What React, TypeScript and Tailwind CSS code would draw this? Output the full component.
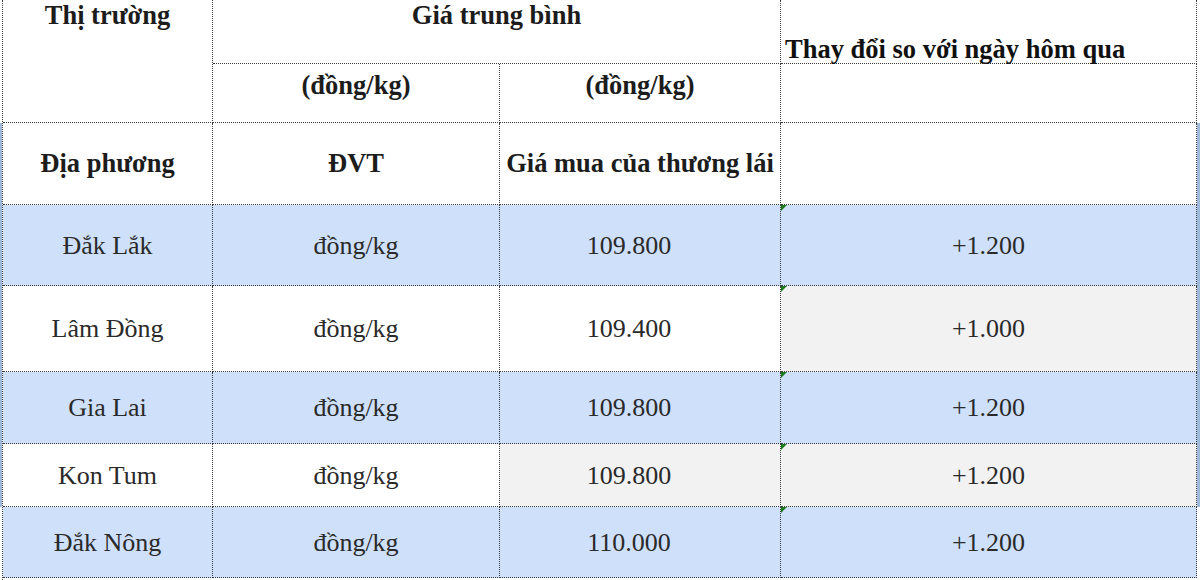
import * as React from "react"

const rows = [
  { name: "Đắk Lắk", price: "109.800", change: "+1.200", h: "h-[81px]", blue: true, grayPrice: false, grayChange: false },
  { name: "Lâm Đồng", price: "109.400", change: "+1.000", h: "h-[86px]", blue: false, grayPrice: false, grayChange: true },
  { name: "Gia Lai", price: "109.800", change: "+1.200", h: "h-[72px]", blue: true, grayPrice: false, grayChange: false },
  { name: "Kon Tum", price: "109.800", change: "+1.200", h: "h-[63px]", blue: false, grayPrice: true, grayChange: true },
  { name: "Đắk Nông", price: "110.000", change: "+1.200", h: "h-[71px]", blue: true, grayPrice: false, grayChange: false },
]

const cell = "border-r border-b border-dotted border-[#3a3a3a] flex items-center justify-center"
const bold = "font-bold text-[#1c1c1c] text-[26.5px]"

const App: React.FC = () => {
  return (
    <div className="w-[1200px] h-[580px] bg-white flex font-['Liberation_Serif',serif] text-[26px] text-[#2a2a2a] overflow-hidden">
      <div className="w-[2px] flex flex-col">
        <div className="h-[123px]" />
        <div className="h-[384px] bg-[#9fb9db]" />
      </div>
      <div className="flex flex-col border-l border-dotted border-[#3a3a3a]">
        {/* header rows 1-2 */}
        <div className="flex h-[123px]">
          <div className={`w-[210px] border-r border-b border-dotted border-[#3a3a3a] flex justify-center leading-[30px] ${bold}`}>
            Thị trường
          </div>
          <div className="flex flex-col">
            <div className={`h-[64px] w-[568px] border-b border-r border-dotted border-[#3a3a3a] flex justify-center leading-[30px] ${bold}`}>
              Giá trung bình
            </div>
            <div className="flex h-[59px]">
              <div className={`w-[287px] ${cell} items-start! pt-[2px] ${bold}`}>(đồng/kg)</div>
              <div className={`w-[281px] ${cell} items-start! pt-[2px] ${bold}`}>(đồng/kg)</div>
            </div>
          </div>
          <div className="w-[416px] flex flex-col">
            <div className={`h-[64px] border-r border-b border-dotted border-[#3a3a3a] flex items-end pl-[4px] leading-[30px] ${bold} text-[#111]!`}>
              <span className="translate-y-[1px]">Thay đổi so với ngày hôm qua</span>
            </div>
            <div className="h-[59px] border-r border-b border-dotted border-[#3a3a3a]" />
          </div>
        </div>
        {/* header row 3 */}
        <div className={`flex h-[82px] ${bold}`}>
          <div className={`w-[210px] ${cell}`}>Địa phương</div>
          <div className={`w-[287px] ${cell}`}>ĐVT</div>
          <div className={`w-[281px] ${cell}`}>Giá mua của thương lái</div>
          <div className={`w-[416px] ${cell}`} />
        </div>
        {rows.map(r => (
          <div key={r.name} className={`flex ${r.h} ${r.blue ? "bg-[#cfe0fb]" : "bg-white"}`}>
            <div className={`w-[210px] ${cell}`}>{r.name}</div>
            <div className={`w-[287px] ${cell}`}>đồng/kg</div>
            <div className={`w-[281px] ${cell} pr-[22px] ${r.grayPrice ? "bg-[#f2f2f2]" : ""}`}>{r.price}</div>
            <div className={`w-[416px] ${cell} relative ${r.grayChange ? "bg-[#f2f2f2]" : ""}`}>
              <svg className="absolute left-0 top-0" width="6" height="6" viewBox="0 0 6 6">
                <polygon points="0,0 6,0 0,6" fill="#1f7a1f" />
              </svg>
              {r.change}
            </div>
          </div>
        ))}
      </div>
      <div className="w-[3px] flex flex-col">
        <div className="h-[123px]" />
        <div className="h-[384px] bg-[#9fb9db]" />
      </div>
    </div>
  )
}

export default App
